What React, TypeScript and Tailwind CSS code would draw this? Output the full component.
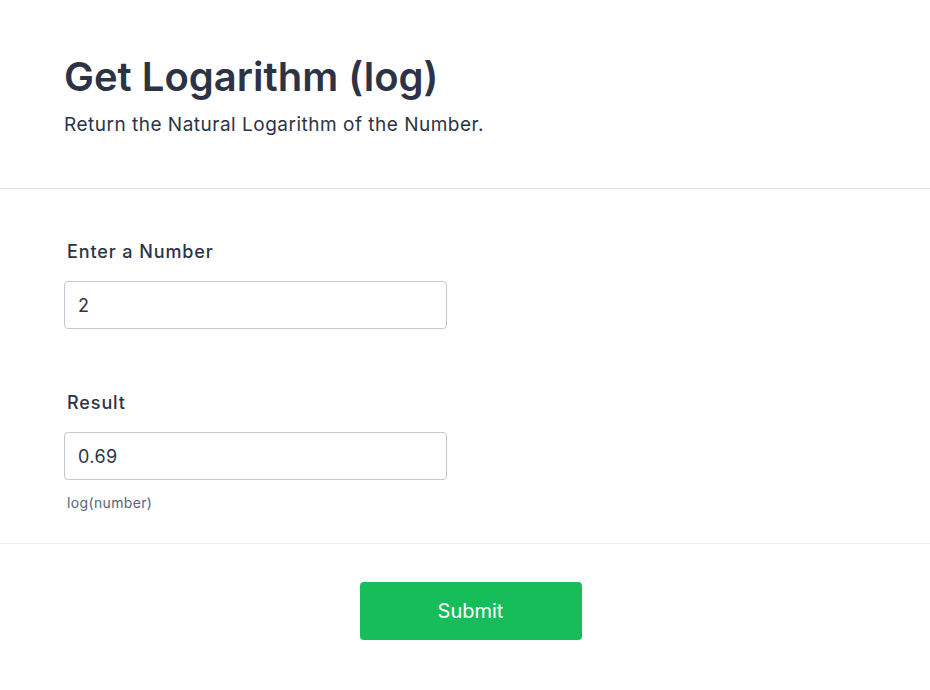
import { useState } from 'react'

export default function App() {
  const [value, setValue] = useState('2')
  const n = parseFloat(value)
  const result = isNaN(n) || n <= 0 ? '' : (Math.round(Math.log(n) * 100) / 100).toString()

  return (
    <div className="min-h-[690px] w-[930px] bg-white text-[#2c3345] font-['Inter',sans-serif]">
      <header className="px-16 pt-[53px] pb-[49px] border-b border-[#e3e5ea]">
        <h1 className="text-[40px] leading-[48px] font-semibold">Get Logarithm (log)</h1>
        <p className="mt-[10px] text-[19px] leading-[28px] tracking-[0.5px]">Return the Natural Logarithm of the Number.</p>
      </header>

      <section className="px-16 pt-[49px] pb-[30px] border-b border-[#ebedf0]">
        <label className="block pl-[3px] text-[18px] leading-[28px] font-medium tracking-[0.9px]">Enter a Number</label>
        <input
          className="mt-[15px] block w-[383px] h-[48px] rounded-[4px] border border-[#c3c7d3] px-[13px] text-[18px] tracking-[0.4px] text-[#2c3345] outline-none"
          value={value}
          onChange={(e) => setValue(e.target.value)}
        />

        <label className="mt-[60px] block pl-[3px] text-[18px] leading-[28px] font-medium tracking-[0.9px]">Result</label>
        <input
          className="mt-[15px] block w-[383px] h-[48px] rounded-[4px] border border-[#c3c7d3] px-[13px] text-[18px] tracking-[0.4px] text-[#2c3345] outline-none"
          value={result}
          readOnly
        />
        <p className="mt-[13px] pl-[3px] text-[14px] leading-[20px] tracking-[0.35px] text-[#57647e]">log(number)</p>
      </section>

      <div className="flex justify-center pt-[38px] pl-[11px]">
        <button className="w-[222px] h-[58px] rounded-[4px] bg-[#18bd5b] text-white text-[20px]">Submit</button>
      </div>
    </div>
  )
}
